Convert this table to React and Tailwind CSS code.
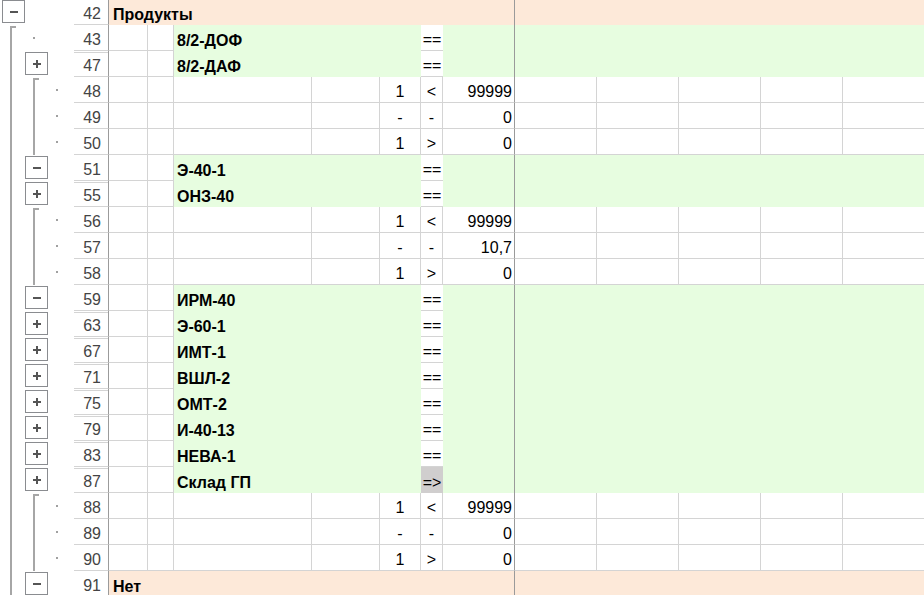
import React from "react";

const ROWS = [
  { n: 42, t: "peach", label: "Продукты", btn: { lvl: 1, sign: "-" } },
  { n: 43, t: "green", label: "8/2-ДОФ", l1Start: true, dot: 2 },
  { n: 47, t: "green", label: "8/2-ДАФ", btn: { lvl: 2, sign: "+" }, hid: true },
  { n: 48, t: "data", e: "1", f: "<", g: "99999", dot: 3, l2: "start" },
  { n: 49, t: "data", e: "-", f: "-", g: "0", dot: 3, l2: "mid" },
  { n: 50, t: "data", e: "1", f: ">", g: "0", dot: 3, l2: "mid" },
  { n: 51, t: "green", label: "Э-40-1", btn: { lvl: 2, sign: "-" } },
  { n: 55, t: "green", label: "ОНЗ-40", btn: { lvl: 2, sign: "+" }, hid: true },
  { n: 56, t: "data", e: "1", f: "<", g: "99999", dot: 3, l2: "start" },
  { n: 57, t: "data", e: "-", f: "-", g: "10,7", dot: 3, l2: "mid" },
  { n: 58, t: "data", e: "1", f: ">", g: "0", dot: 3, l2: "mid" },
  { n: 59, t: "green", label: "ИРМ-40", btn: { lvl: 2, sign: "-" } },
  { n: 63, t: "green", label: "Э-60-1", btn: { lvl: 2, sign: "+" }, hid: true },
  { n: 67, t: "green", label: "ИМТ-1", btn: { lvl: 2, sign: "+" }, hid: true },
  { n: 71, t: "green", label: "ВШЛ-2", btn: { lvl: 2, sign: "+" }, hid: true },
  { n: 75, t: "green", label: "ОМТ-2", btn: { lvl: 2, sign: "+" }, hid: true },
  { n: 79, t: "green", label: "И-40-13", btn: { lvl: 2, sign: "+" }, hid: true },
  { n: 83, t: "green", label: "НЕВА-1", btn: { lvl: 2, sign: "+" }, hid: true },
  { n: 87, t: "green", label: "Склад ГП", btn: { lvl: 2, sign: "+" }, hid: true, arrow: true },
  { n: 88, t: "data", e: "1", f: "<", g: "99999", dot: 3, l2: "start" },
  { n: 89, t: "data", e: "-", f: "-", g: "0", dot: 3, l2: "mid" },
  { n: 90, t: "data", e: "1", f: ">", g: "0", dot: 3, l2: "mid" },
  { n: 91, t: "peach", label: "Нет", btn: { lvl: 2, sign: "-" } },
];

function Outline({ row, h, first }) {
  const lineC = "#a6a6a6";
  const parts = [];
  if (!first) {
    const y = row.l1Start ? 1 : 0;
    parts.push(<rect key="l1" x={10} y={y} width={2} height={h - y} fill={lineC} />);
    if (row.l1Start) parts.push(<rect key="l1t" x={10} y={1} width={6} height={2} fill={lineC} />);
  }
  if (row.l2) {
    const y = row.l2 === "start" ? 1 : 0;
    parts.push(<rect key="l2" x={33} y={y} width={2} height={h - y} fill={lineC} />);
    if (row.l2 === "start") parts.push(<rect key="l2t" x={33} y={1} width={6} height={2} fill={lineC} />);
  }
  if (row.dot) {
    parts.push(
      <rect key="dot" x={row.dot === 2 ? 33 : 56} y={12} width={2} height={2} fill="#a0a0a0" />
    );
  }
  if (row.btn) {
    const bx = row.btn.lvl === 1 ? 2 : 25;
    const by = first ? 0 : 1;
    parts.push(
      <rect key="b" x={bx + 0.5} y={by + 0.5} width={22} height={22} fill="#ffffff" stroke="#8a8c90" strokeWidth={1} />
    );
    parts.push(<rect key="bh" x={bx + 8} y={by + 11} width={8} height={2} fill="#555555" />);
    if (row.btn.sign === "+")
      parts.push(<rect key="bv" x={bx + 11} y={by + 8} width={2} height={8} fill="#555555" />);
  }
  return (
    <svg width="74" height={h} className="block shrink-0">
      {parts}
    </svg>
  );
}

function Header({ n, hid }) {
  return (
    <div
      className={`w-[35px] shrink-0 border-r border-b border-r-[#9b9b9b] border-b-[#d4d4d4] flex items-end justify-end pr-[7px] pb-[2px] text-[#444444] ${
        hid ? "bg-[linear-gradient(to_bottom,transparent_1px,#d4d4d4_1px,#d4d4d4_2px,transparent_2px)]" : "bg-white"
      }`}
    >
      {n}
    </div>
  );
}

function Row({ row, first }) {
  return (
    <div className={`flex ${first ? "h-[25px]" : "h-[26px]"}`}>
      <Outline row={row} h={first ? 25 : 26} first={first} />
      <Header n={row.n} hid={row.hid} />
      {row.t === "peach" && (
        <>
          <div className="w-[406px] shrink-0 bg-[#fde9d9] border-r border-r-[#9a9a9a] flex items-end pl-[4px] pb-[2px] font-bold text-black">
            {row.label}
          </div>
          <div className="flex-1 bg-[#fde9d9]" />
        </>
      )}
      {row.t === "green" && (
        <>
          <div className="w-[39px] shrink-0 border-r border-b border-[#d4d4d4]" />
          <div className="w-[26px] shrink-0 border-r border-b border-[#d4d4d4]" />
          <div className="w-[247px] shrink-0 bg-[#e7fde0] flex items-end pl-[3px] pb-[2px] font-bold text-black whitespace-nowrap">
            {row.label}
          </div>
          <div
            className={`w-[22px] shrink-0 flex items-end justify-center pb-[2px] text-black ${
              row.arrow ? "bg-[#d0cece]" : "bg-white border-b border-[#d4d4d4]"
            }`}
          >
            {row.arrow ? "=>" : "=="}
          </div>
          <div className="w-[72px] shrink-0 bg-[#e7fde0] border-r border-r-[#9a9a9a]" />
          <div className="flex-1 bg-[#e7fde0]" />
        </>
      )}
      {row.t === "data" && (
        <>
          <div className="w-[39px] shrink-0 border-r border-b border-[#d4d4d4]" />
          <div className="w-[26px] shrink-0 border-r border-b border-[#d4d4d4]" />
          <div className="w-[138px] shrink-0 border-r border-b border-[#d4d4d4]" />
          <div className="w-[68px] shrink-0 border-r border-b border-[#d4d4d4]" />
          <div className="w-[41px] shrink-0 border-r border-b border-[#d4d4d4] flex items-end justify-center pb-[2px] text-black">
            {row.e}
          </div>
          <div className="w-[22px] shrink-0 border-r border-b border-[#d4d4d4] flex items-end justify-center pb-[2px] text-black">
            {row.f}
          </div>
          <div className="w-[72px] shrink-0 border-b border-b-[#d4d4d4] border-r border-r-[#9a9a9a] flex items-end justify-end pr-[2px] pb-[2px] text-black">
            {row.g}
          </div>
          <div className="w-[82px] shrink-0 border-r border-b border-[#d4d4d4]" />
          <div className="w-[82px] shrink-0 border-r border-b border-[#d4d4d4]" />
          <div className="w-[82px] shrink-0 border-r border-b border-[#d4d4d4]" />
          <div className="w-[82px] shrink-0 border-r border-b border-[#d4d4d4]" />
          <div className="flex-1 border-b border-[#d4d4d4]" />
        </>
      )}
    </div>
  );
}

export default function App() {
  return (
    <div className="w-[924px] h-[595px] overflow-hidden bg-white font-['Liberation_Sans',Arial,sans-serif] text-[16px] leading-[16px]">
      {ROWS.map((r, i) => (
        <Row key={r.n} row={r} first={i === 0} />
      ))}
    </div>
  );
}
